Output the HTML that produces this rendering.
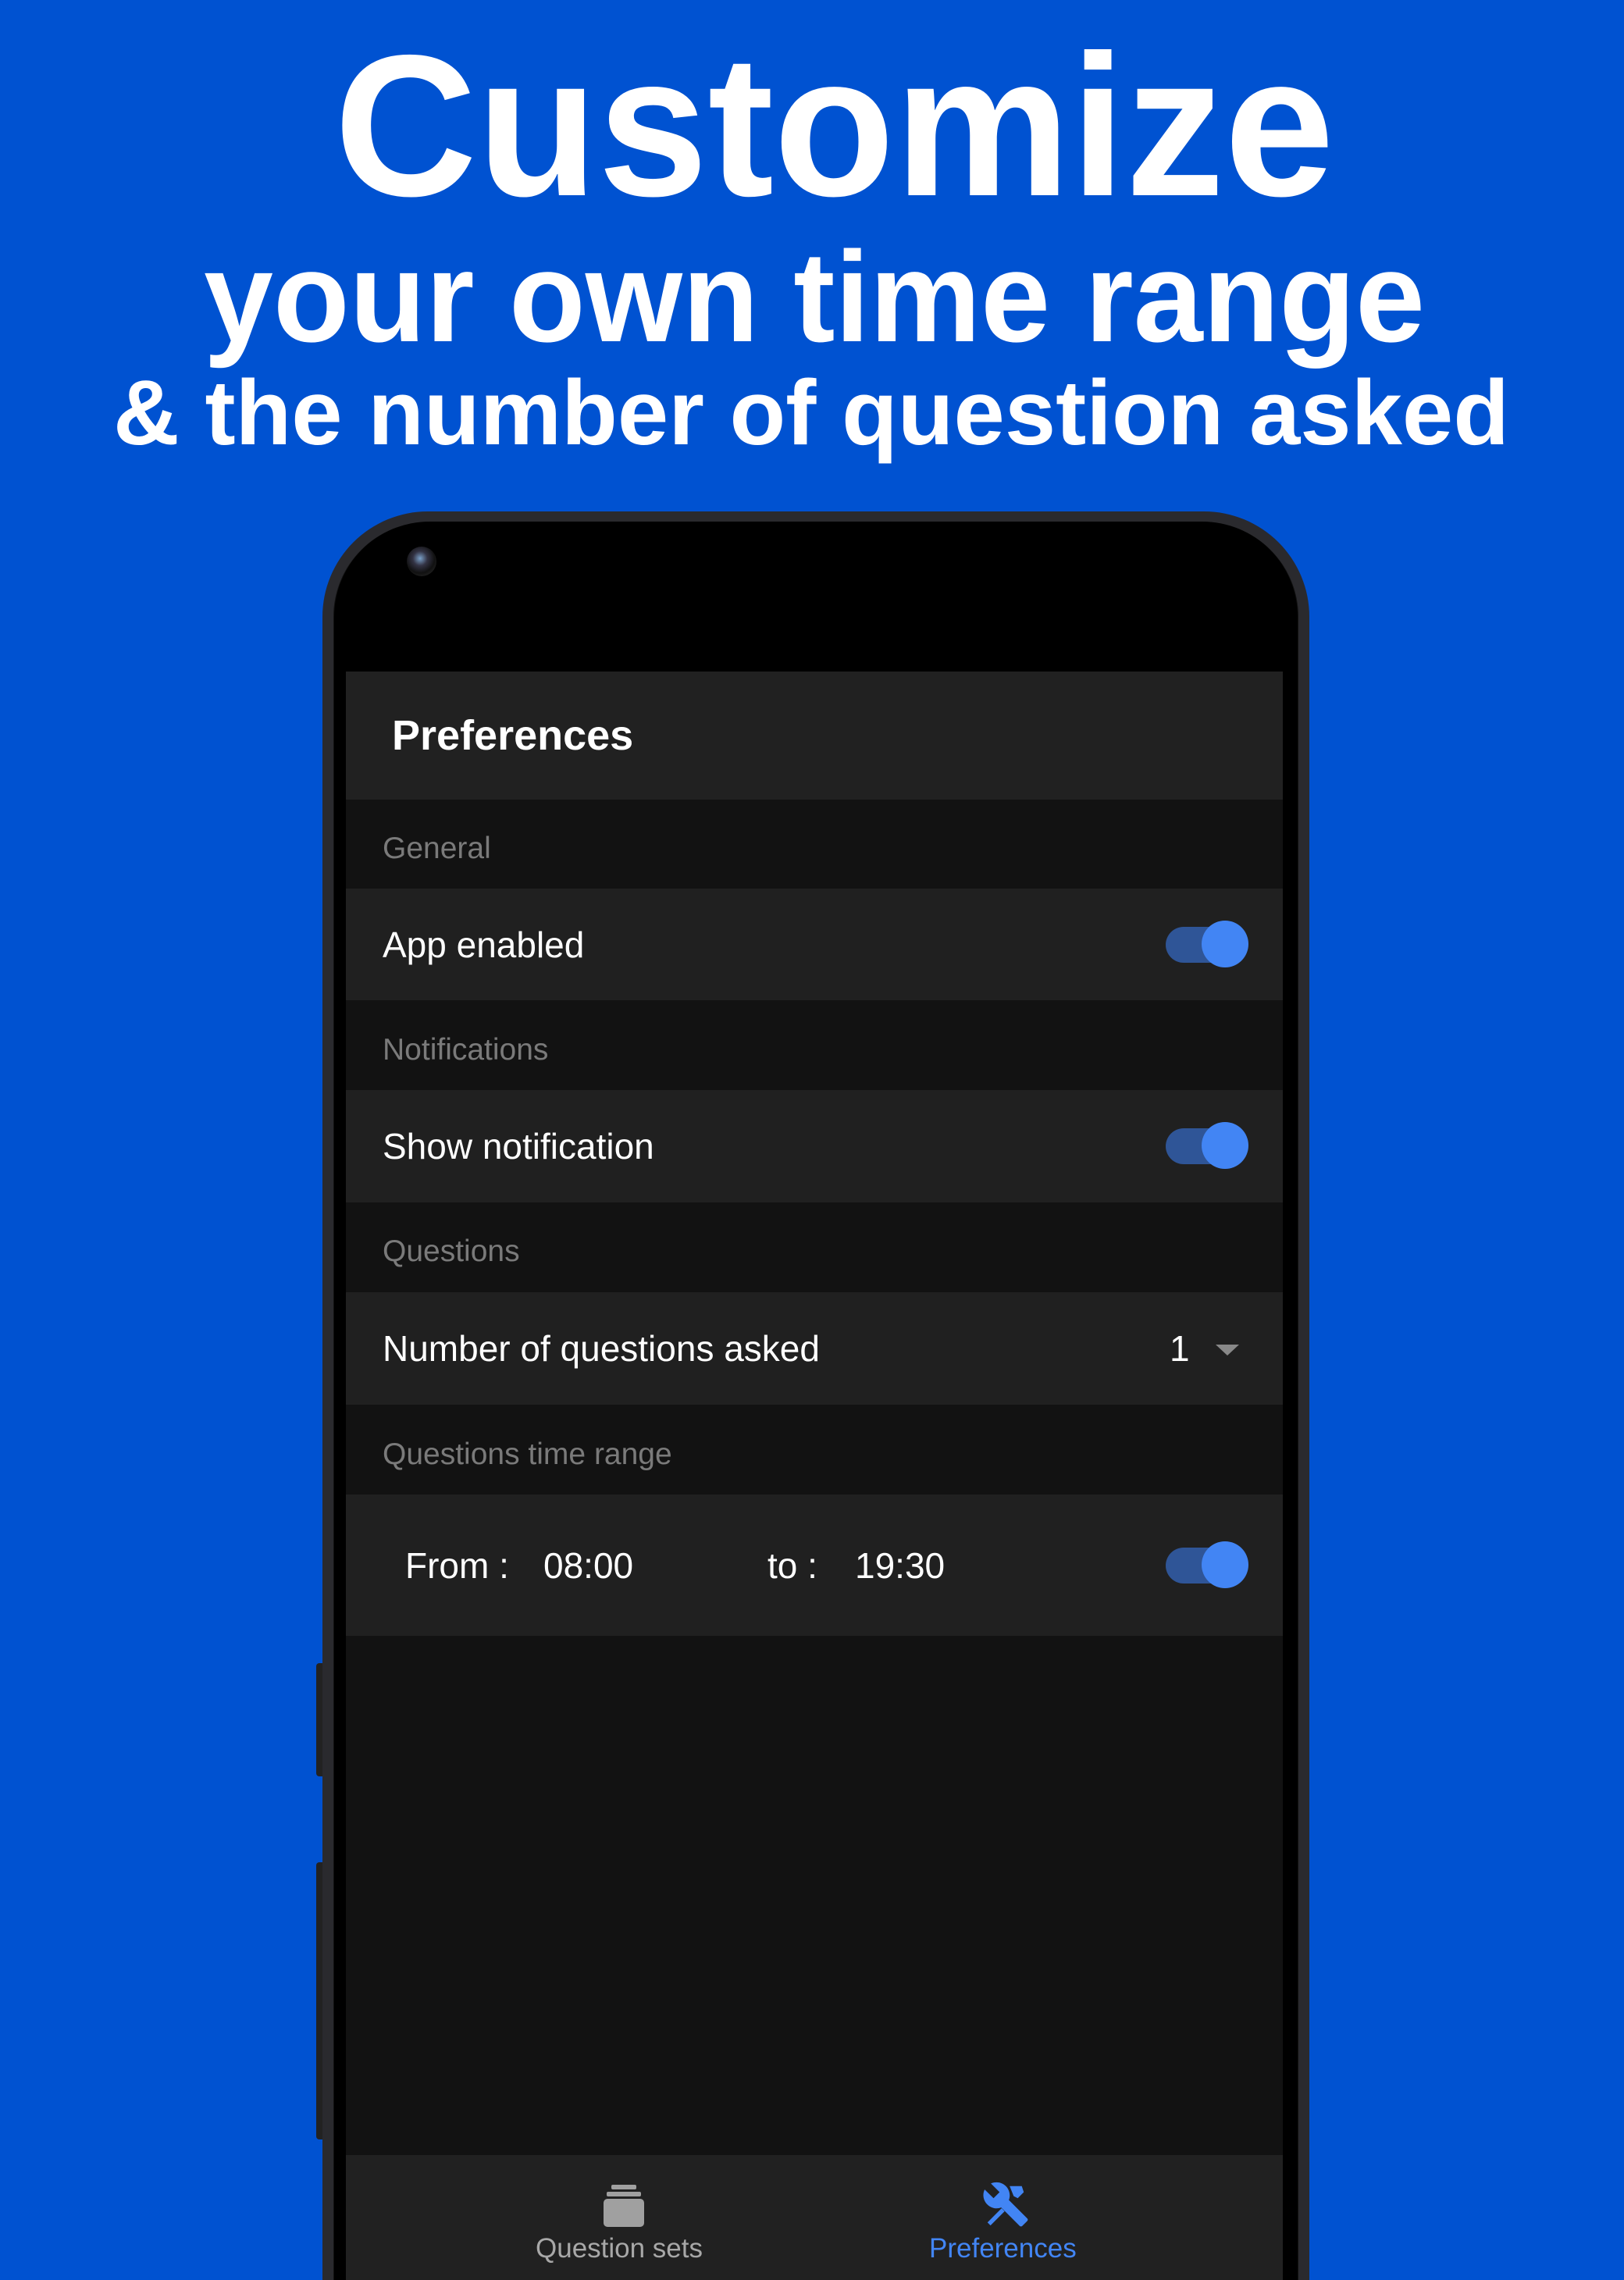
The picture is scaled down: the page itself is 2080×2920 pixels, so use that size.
<!DOCTYPE html>
<html style="overflow:hidden;height:2920px"><head><meta charset="utf-8"><style>
*{margin:0;padding:0;box-sizing:border-box}
body{width:2080px;height:2920px;background:#0052d1;position:relative;overflow:hidden;font-family:"Liberation Sans",sans-serif}
.abs{position:absolute}
.phone{left:413px;top:655px;width:1264px;height:2265px;background:#111;border-radius:135px 135px 0 0;border:14px solid #2a2a2e;border-bottom:none}
.inner{left:428px;top:668px;width:1234px;height:2252px;background:#000;border-radius:122px 122px 0 0}
.screen{left:443px;top:860px;width:1200px;height:2060px;background:#121212;overflow:hidden}
.row{position:absolute;left:0;width:1200px;background:#202020;color:#fff;font-size:46px}
.hdr{position:absolute;left:47px;color:#7a7a7a;font-size:39px}
.lbl{position:absolute;left:47px;top:50%;transform:translateY(-50%)}
.tog{position:absolute;left:1050px;width:100px;height:46px;top:50%;margin-top:-23px;background:#2f5597;border-radius:23px}
.tog:after{content:"";position:absolute;right:-6px;top:-8px;width:60px;height:60px;border-radius:50%;background:#4285f4}
</style></head><body>
<svg class="abs" style="left:0;top:0" width="2080" height="620">
<g fill="#fff" font-family="Liberation Sans, sans-serif" font-weight="bold" text-anchor="start">
<text x="428" y="250" font-size="258" textLength="1281" lengthAdjust="spacingAndGlyphs">Customize</text>
<text x="261" y="437" font-size="165" textLength="1564" lengthAdjust="spacingAndGlyphs">your own time range</text>
<text x="145" y="569" font-size="118" textLength="1788" lengthAdjust="spacingAndGlyphs">&amp; the number of question asked</text>
</g></svg>
<div class="abs" style="left:405px;top:2130px;width:12px;height:145px;background:#222;border-radius:4px"></div>
<div class="abs" style="left:405px;top:2385px;width:12px;height:355px;background:#222;border-radius:4px"></div>
<div class="abs phone"></div>
<div class="abs inner"></div>
<div class="abs screen">
 <div class="row" style="top:0;height:164px;background:#212121"><div style="position:absolute;left:59px;top:50%;transform:translateY(-50%);font-size:54px;font-weight:bold">Preferences</div></div>
 <div class="hdr" style="top:205px">General</div>
 <div class="row" style="top:278px;height:143px"><div class="lbl">App enabled</div><div class="tog"></div></div>
 <div class="hdr" style="top:463px">Notifications</div>
 <div class="row" style="top:536px;height:144px"><div class="lbl">Show notification</div><div class="tog"></div></div>
 <div class="hdr" style="top:721px">Questions</div>
 <div class="row" style="top:795px;height:144px"><div class="lbl">Number of questions asked</div>
  <div style="position:absolute;left:1055px;top:50%;transform:translateY(-50%)">1</div>
  <div style="position:absolute;left:1114px;top:67px;width:0;height:0;border-left:15px solid transparent;border-right:15px solid transparent;border-top:14px solid #888"></div></div>
 <div class="hdr" style="top:981px">Questions time range</div>
 <div class="row" style="top:1054px;height:181px">
  <div style="position:absolute;left:76px;top:50%;transform:translateY(-50%)">From :</div>
  <div style="position:absolute;left:253px;top:50%;transform:translateY(-50%)">08:00</div>
  <div style="position:absolute;left:540px;top:50%;transform:translateY(-50%)">to :</div>
  <div style="position:absolute;left:652px;top:50%;transform:translateY(-50%)">19:30</div>
  <div class="tog"></div></div>
 <div class="row" style="top:1900px;height:160px;background:#212121">
  <svg style="position:absolute;left:328px;top:38px" width="56" height="54"><rect x="12" y="0" width="32" height="6" rx="2" fill="#a0a0a0"/><rect x="6" y="9" width="44" height="6" rx="2" fill="#a0a0a0"/><rect x="2" y="18" width="52" height="36" rx="5" fill="#a0a0a0"/></svg>
  <div style="position:absolute;left:243px;top:100px;font-size:35px;color:#a8a8a8">Question sets</div>
  <svg style="position:absolute;left:812px;top:32px" width="66" height="62" viewBox="0 0 24 24"><path fill="#4285f4" d="M22.7 19l-9.1-9.1c.9-2.3.4-5-1.5-6.9-2-2-5-2.4-7.4-1.3L9 6 6 9 1.6 4.7C.4 7.1.9 10.1 2.9 12.1c1.9 1.9 4.6 2.4 6.9 1.5l9.1 9.1c.4.4 1 .4 1.4 0l2.3-2.3c.5-.4.5-1.100.1-1.4z"/><path fill="#4285f4" d="M3 21l7-7 1.5 1.5-7 7z M14 3l6 0 1 3-3 3-2-1z"/></svg>
  <div style="position:absolute;left:747px;top:100px;font-size:35px;color:#4285f4">Preferences</div>
 </div>
</div>
<div class="abs" style="left:521px;top:700px;width:38px;height:38px;border-radius:50%;background:radial-gradient(circle at 45% 40%,#7aa0c8 0,#334 30%,#111 60%,#333 100%)"></div>
</body></html>
